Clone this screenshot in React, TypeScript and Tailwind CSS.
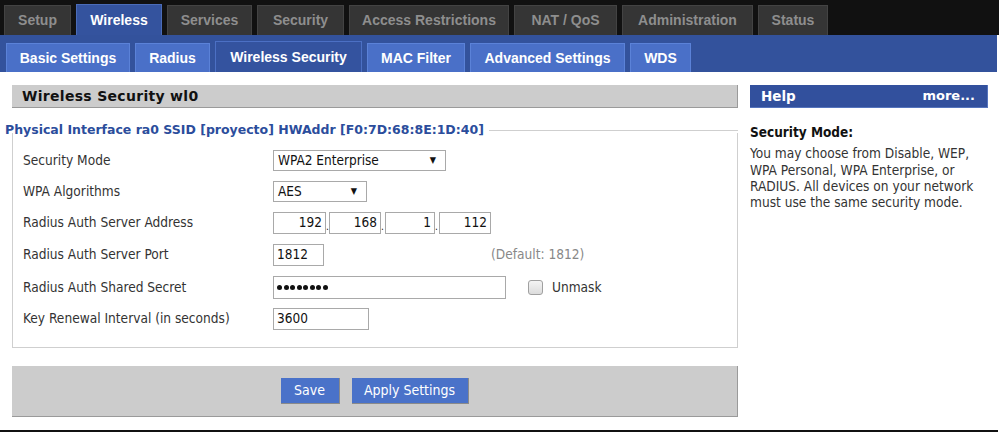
import React from "react";

const topTabs: { label: string; w: string; active?: boolean }[] = [
  { label: "Setup", w: "w-[67px]" },
  { label: "Wireless", w: "w-[86px]", active: true },
  { label: "Services", w: "w-[85px]" },
  { label: "Security", w: "w-[87px]" },
  { label: "Access Restrictions", w: "w-[160px]" },
  { label: "NAT / QoS", w: "w-[103px]" },
  { label: "Administration", w: "w-[131px]" },
  { label: "Status", w: "w-[70px]" },
];

const subTabs: { label: string; w: string; active?: boolean }[] = [
  { label: "Basic Settings", w: "w-[124px]" },
  { label: "Radius", w: "w-[75px]" },
  { label: "Wireless Security", w: "w-[147px]", active: true },
  { label: "MAC Filter", w: "w-[98px]" },
  { label: "Advanced Settings", w: "w-[155px]" },
  { label: "WDS", w: "w-[61px]" },
];

const COND = '"DejaVu Sans Condensed", "DejaVu Sans", Tahoma, sans-serif';

function Select({ value, w }: { value: string; w: string }) {
  return (
    <div
      className={`${w} h-[21px] border border-[#a9a9a9] bg-white flex items-center justify-between pl-[4px] pr-[9px] text-[13.5px] text-[#111]`}
    >
      <span>{value}</span>
      <span className="text-[9px] leading-none">▼</span>
    </div>
  );
}

function Input({ value, w, right }: { value: string; w: string; right?: boolean }) {
  return (
    <div
      className={`${w} h-[22px] border border-[#a9a9a9] bg-white flex items-center px-[3px] text-[13.5px] text-[#111] ${
        right ? "justify-end" : "justify-start"
      }`}
    >
      {value}
    </div>
  );
}

function Row({ label, h, children }: { label: string; h: string; children: React.ReactNode }) {
  return (
    <div className={`flex items-center ${h}`}>
      <div className="w-[260px] pl-[10px] text-[13.6px] text-[#333]">{label}</div>
      {children}
    </div>
  );
}

export default function App() {
  return (
    <div
      className="w-[999px] h-[433px] bg-white overflow-hidden flex flex-col"
      style={{ fontFamily: '"Liberation Sans", Arial, sans-serif' }}
    >
      {/* top tabs */}
      <div className="h-[35px] bg-[#111111] flex items-end pl-[4px] gap-[5px]">
        {topTabs.map((t) =>
          t.active ? (
            <div
              key={t.label}
              className={`${t.w} h-[31px] bg-[#34539e] border-t border-l border-r border-[#4b6cb8] flex items-center justify-center text-[14px] font-bold text-white`}
            >
              {t.label}
            </div>
          ) : (
            <div
              key={t.label}
              className={`${t.w} h-[30px] bg-[#353535] border-t border-l border-r border-[#434343] flex items-center justify-center text-[14px] font-bold text-[#8e8e8e]`}
            >
              {t.label}
            </div>
          )
        )}
      </div>

      {/* sub tabs */}
      <div className="h-[37px] w-[997px] bg-[#33529c] flex items-end pl-[6px] gap-[5px]">
        {subTabs.map((t) =>
          t.active ? (
            <div
              key={t.label}
              className={`${t.w} h-[31px] bg-[#34539f] border-t border-l border-r border-[#4c70c4] flex items-center justify-center text-[14px] font-bold text-white`}
            >
              {t.label}
            </div>
          ) : (
            <div
              key={t.label}
              className={`${t.w} h-[29px] bg-[#4a70c8] border-t border-l border-r border-[#5b82d8] flex items-center justify-center text-[14px] font-bold text-white`}
            >
              {t.label}
            </div>
          )
        )}
      </div>

      {/* content */}
      <div className="flex pt-[13px]" style={{ fontFamily: COND }}>
        {/* main */}
        <div className="ml-[12px] w-[726px] flex flex-col">
          <div
            className="h-[23px] bg-[#cccccc] border-r border-b border-[#9a9a9a] flex items-center pl-[10px] text-[14px] font-bold text-[#111] tracking-[0.3px]"
            style={{ fontFamily: '"DejaVu Sans", Verdana, sans-serif' }}
          >
            Wireless Security wl0
          </div>

          {/* fieldset */}
          <div className="mt-[14px] flex items-center h-[16px] -ml-[7px]">
            <span
              className="text-[12.5px] font-bold text-[#2b4d9c] whitespace-nowrap"
              style={{ fontFamily: '"DejaVu Sans", Verdana, sans-serif' }}
            >
              Physical Interface ra0 SSID [proyecto] HWAddr [F0:7D:68:8E:1D:40]
            </span>
            <div className="flex-1 h-px bg-[#cfcfcf] ml-[5px]" />
          </div>
          <div className="-mt-[5px] border-l border-r border-b border-[#cfcfcf] pt-[12px] pb-[13px]">
            <Row label="Security Mode" h="h-[31px]">
              <Select value="WPA2 Enterprise" w="w-[173px]" />
            </Row>
            <Row label="WPA Algorithms" h="h-[31px]">
              <Select value="AES" w="w-[94px]" />
            </Row>
            <Row label="Radius Auth Server Address" h="h-[31px]">
              <div className="flex items-end text-[13px] text-[#111]">
                <Input value="192" w="w-[53px]" right />
                <span className="w-[3px] text-[10px] leading-[14px]">.</span>
                <Input value="168" w="w-[52px]" right />
                <span className="w-[4px] text-[10px] leading-[14px]">.</span>
                <Input value="1" w="w-[50px]" right />
                <span className="w-[4px] text-[10px] leading-[14px]">.</span>
                <Input value="112" w="w-[52px]" right />
              </div>
            </Row>
            <Row label="Radius Auth Server Port" h="h-[33px]">
              <Input value="1812" w="w-[51px]" />
              <span className="ml-[167px] text-[13.6px] text-[#888]">(Default: 1812)</span>
            </Row>
            <Row label="Radius Auth Shared Secret" h="h-[32px]">
              <div className="w-[233px] h-[23px] border border-[#a9a9a9] bg-white flex items-center pl-[3px] gap-[1.5px]">
                {[0, 1, 2, 3, 4, 5, 6, 7].map((i) => (
                  <span key={i} className="w-[5px] h-[5px] rounded-full bg-[#111]" />
                ))}
              </div>
              <div className="ml-[22px] w-[15px] h-[15px] rounded-[3px] border border-[#a0a0a0] bg-gradient-to-b from-[#f4f4f4] to-[#dcdcdc]" />
              <span className="ml-[9px] text-[13.6px] text-[#333]">Unmask</span>
            </Row>
            <Row label="Key Renewal Interval (in seconds)" h="h-[31px]">
              <Input value="3600" w="w-[96px]" />
            </Row>
          </div>

          {/* buttons */}
          <div className="mt-[18px] h-[51px] bg-[#cccccc] border-r border-b border-[#9a9a9a] flex items-center justify-center gap-[12px]">
            <div
              className="w-[59px] h-[26px] bg-[#4a72c9] border-r border-b border-[#8a8a8a] flex items-center justify-center text-[14px] text-white"
              style={{ fontFamily: '"Liberation Sans Narrow", "DejaVu Sans Condensed", sans-serif' }}
            >
              Save
            </div>
            <div
              className="w-[117px] h-[26px] bg-[#4a72c9] border-r border-b border-[#8a8a8a] flex items-center justify-center text-[14px] text-white"
              style={{ fontFamily: '"Liberation Sans Narrow", "DejaVu Sans Condensed", sans-serif' }}
            >
              Apply Settings
            </div>
          </div>
        </div>

        {/* help */}
        <div className="ml-[12px] w-[238px] flex flex-col">
          <div
            className="h-[23px] bg-[#32509d] border-r border-b border-[#5574bd] flex items-center justify-between pl-[11px] pr-[12px] text-[13.5px] font-bold text-white"
            style={{ fontFamily: '"DejaVu Sans", Verdana, sans-serif' }}
          >
            <span>Help</span>
            <span className="text-[13px]">more...</span>
          </div>
          <div className="mt-[14px] text-[13.5px] font-bold text-[#111]">Security Mode:</div>
          <p className="mt-[3px] text-[13.6px] leading-[16.3px] text-[#333]">
            You may choose from Disable, WEP, WPA Personal, WPA Enterprise, or RADIUS. All devices on
            your network must use the same security mode.
          </p>
        </div>
      </div>

      <div className="flex-1" />
      <div className="mb-[1px] w-[998px] h-[2px] bg-[#111]" />
    </div>
  );
}
